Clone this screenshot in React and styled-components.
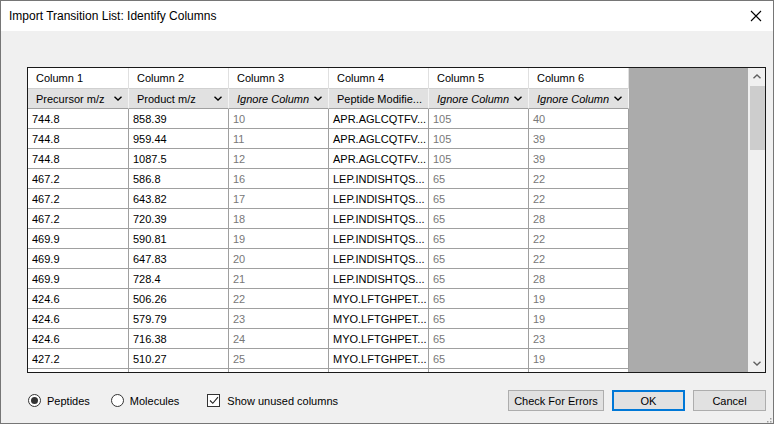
import React from 'react'
import styled, { createGlobalStyle } from 'styled-components'

const Global = createGlobalStyle`
  html, body { margin: 0; padding: 0; background: #f0f0f0; }
  * { box-sizing: border-box; }
`;

const Window = styled.div`
  width: 774px;
  height: 424px;
  border: 1px solid #767676;
  background: #f0f0f0;
  display: flex;
  flex-direction: column;
  font-family: "Liberation Sans", Arial, sans-serif;
  position: relative;
`;

const TitleBar = styled.div`
  height: 30px;
  background: #fff;
  display: flex;
  align-items: center;
  justify-content: space-between;
  padding: 0 8px 0 8px;
  font-size: 12px;
  color: #000;
`;

const Close = styled.div`
  width: 14px;
  height: 14px;
  margin-right: 2px;
  display: flex;
`;

const Body = styled.div`
  flex: 1;
  padding: 36px 7px 0 26px;
  display: flex;
  flex-direction: column;
`;

const GridFrame = styled.div`
  height: 306px;
  border: 1px solid #1a1a1a;
  display: flex;
  background: #ababab;
  overflow: hidden;
`;

const Table = styled.div`
  flex: 1;
  display: flex;
  flex-direction: column;
  font-size: 11px;
`;

const Row = styled.div`
  display: flex;
  height: ${p => p.h}px;
  flex-shrink: 0;
`;

const HeadCell = styled.div`
  width: ${p => (p.first ? 101 : 100)}px;
  background: #fff;
  border-right: 1px solid #e0e0e0;
  padding-left: 8px;
  display: flex;
  align-items: center;
  color: #000;
`;

const ComboCell = styled.div`
  width: ${p => (p.first ? 101 : 100)}px;
  background: #e1e1e1;
  border-top: 1px solid #d0d0d0;
  border-bottom: 1px solid #a0a0a0;
  border-right: 1px solid #f4f4f4;
  padding: 0 6px 0 8px;
  display: flex;
  align-items: center;
  justify-content: space-between;
  font-style: ${p => (p.ignored ? 'italic' : 'normal')};
  color: #000;
  white-space: nowrap;
`;

const Cell = styled.div`
  width: ${p => (p.first ? 101 : 100)}px;
  background: #fff;
  border-right: 1px solid #a0a0a0;
  border-bottom: 1px solid #a0a0a0;
  padding-left: 4px;
  display: flex;
  align-items: center;
  color: ${p => (p.ignored ? '#787878' : '#000')};
  white-space: nowrap;
  overflow: hidden;
`;

const ScrollBar = styled.div`
  width: 17px;
  background: #f0f0f0;
  display: flex;
  flex-direction: column;
  align-items: center;
`;

const ScrollArrow = styled.div`
  width: 17px;
  height: 17px;
  display: flex;
  align-items: center;
  justify-content: center;
`;

const Thumb = styled.div`
  width: 15px;
  margin-left: 1px;
  height: 64px;
  background: #cdcdcd;
  margin-top: 1px;
`;

const Spacer = styled.div`
  flex: 1;
`;

const Footer = styled.div`
  margin-top: 17px;
  height: 21px;
  display: flex;
  align-items: center;
  font-size: 11px;
  color: #000;
`;

const Option = styled.label`
  display: flex;
  align-items: center;
  gap: ${p => p.gap}px;
  margin-left: ${p => p.ml}px;
  white-space: nowrap;
`;

const Radio = styled.span`
  width: 13px;
  height: 13px;
  border-radius: 50%;
  border: 1px solid #333;
  background: #fff;
  display: flex;
  align-items: center;
  justify-content: center;
  &::after {
    content: '';
    width: 7px;
    height: 7px;
    border-radius: 50%;
    background: ${p => (p.checked ? '#333' : 'transparent')};
  }
`;

const Check = styled.span`
  width: 13px;
  height: 13px;
  border: 1px solid #333;
  background: #fff;
  display: flex;
  align-items: center;
  justify-content: center;
`;

const Button = styled.button`
  width: ${p => p.w}px;
  height: 21px;
  margin-left: ${p => p.ml}px;
  background: #e1e1e1;
  border: ${p => (p.primary ? '2px solid #0078d7' : '1px solid #adadad')};
  font-family: "Liberation Sans", Arial, sans-serif;
  font-size: 11px;
  color: #000;
  padding: 0;
  display: flex;
  align-items: center;
  justify-content: center;
`;

const Grip = styled.div`
  position: absolute;
  right: 1px;
  bottom: 1px;
  width: 10px;
  height: 10px;
`;

const Chevron = () => (
  <svg width="8" height="5" viewBox="0 0 8 5">
    <path d="M0.5 0.8 L4 4 L7.5 0.8" fill="none" stroke="#000" strokeWidth="1.4" />
  </svg>
);

const columns = [
  { name: 'Column 1', type: 'Precursor m/z' },
  { name: 'Column 2', type: 'Product m/z' },
  { name: 'Column 3', type: 'Ignore Column', ignored: true },
  { name: 'Column 4', type: 'Peptide Modifie...' },
  { name: 'Column 5', type: 'Ignore Column', ignored: true },
  { name: 'Column 6', type: 'Ignore Column', ignored: true },
];

const APR = 'APR.AGLCQTFV...';
const LEP = 'LEP.INDISHTQS...';
const MYO = 'MYO.LFTGHPET...';

const rows = [
  ['744.8', '858.39', '10', APR, '105', '40'],
  ['744.8', '959.44', '11', APR, '105', '39'],
  ['744.8', '1087.5', '12', APR, '105', '39'],
  ['467.2', '586.8', '16', LEP, '65', '22'],
  ['467.2', '643.82', '17', LEP, '65', '22'],
  ['467.2', '720.39', '18', LEP, '65', '28'],
  ['469.9', '590.81', '19', LEP, '65', '22'],
  ['469.9', '647.83', '20', LEP, '65', '22'],
  ['469.9', '728.4', '21', LEP, '65', '28'],
  ['424.6', '506.26', '22', MYO, '65', '19'],
  ['424.6', '579.79', '23', MYO, '65', '19'],
  ['424.6', '716.38', '24', MYO, '65', '23'],
  ['427.2', '510.27', '25', MYO, '65', '19'],
  ['', '', '', '', '', ''],
];

export default function App() {
  return (
    <Window>
      <Global />
      <TitleBar>
        <span>Import Transition List: Identify Columns</span>
        <Close>
          <svg width="14" height="14" viewBox="0 0 14 14">
            <path d="M2 2 L12 12 M12 2 L2 12" stroke="#000" strokeWidth="1.1" />
          </svg>
        </Close>
      </TitleBar>
      <Body>
        <GridFrame>
          <Table>
            <Row h={20}>
              {columns.map((c, i) => (
                <HeadCell key={i} first={i === 0}>{c.name}</HeadCell>
              ))}
            </Row>
            <Row h={21}>
              {columns.map((c, i) => (
                <ComboCell key={i} first={i === 0} ignored={c.ignored}>
                  <span>{c.type}</span>
                  <Chevron />
                </ComboCell>
              ))}
            </Row>
            {rows.map((r, ri) => (
              <Row h={20} key={ri}>
                {r.map((v, ci) => (
                  <Cell key={ci} first={ci === 0} ignored={columns[ci].ignored}>{v}</Cell>
                ))}
              </Row>
            ))}
          </Table>
          <ScrollBar>
            <ScrollArrow>
              <svg width="8" height="5" viewBox="0 0 8 5">
                <path d="M0.5 4.2 L4 1 L7.5 4.2" fill="none" stroke="#606060" strokeWidth="1.4" />
              </svg>
            </ScrollArrow>
            <Thumb />
            <Spacer />
            <ScrollArrow>
              <svg width="8" height="5" viewBox="0 0 8 5">
                <path d="M0.5 0.8 L4 4 L7.5 0.8" fill="none" stroke="#606060" strokeWidth="1.4" />
              </svg>
            </ScrollArrow>
          </ScrollBar>
        </GridFrame>
        <Footer>
          <Option ml={1} gap={6}>
            <Radio checked />
            <span>Peptides</span>
          </Option>
          <Option ml={21} gap={6}>
            <Radio />
            <span>Molecules</span>
          </Option>
          <Option ml={28} gap={7}>
            <Check>
              <svg width="10" height="9" viewBox="0 0 10 9">
                <path d="M1 4.5 L3.8 7.3 L9 1.2" fill="none" stroke="#222" strokeWidth="1.1" />
              </svg>
            </Check>
            <span>Show unused columns</span>
          </Option>
          <Spacer />
          <Button w={96}>Check For Errors</Button>
          <Button w={73} ml={8} primary>OK</Button>
          <Button w={73} ml={8}>Cancel</Button>
        </Footer>
      </Body>
      <Grip>
        <svg width="10" height="10" viewBox="0 0 10 10">
          {[[8, 2], [8, 5], [5, 5], [8, 8], [5, 8], [2, 8]].map(([x, y], i) => (
            <rect key={i} x={x} y={y} width="1.5" height="1.5" fill="#a0a0a0" />
          ))}
        </svg>
      </Grip>
    </Window>
  );
}
